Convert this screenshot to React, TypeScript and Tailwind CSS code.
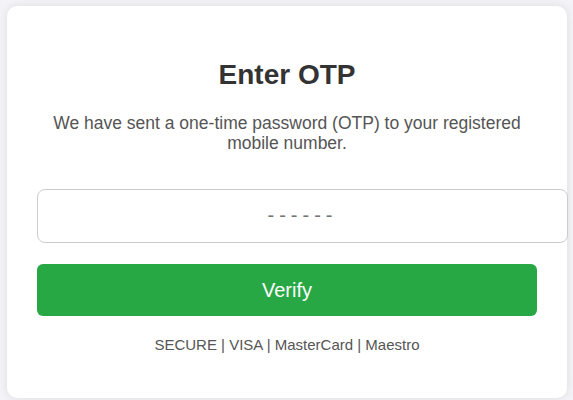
import React from "react";

export default function App() {
  return (
    <div
      className="min-h-screen bg-[#f4f4f8] pt-[6px] pl-[7px]"
      style={{ fontFamily: '"Liberation Sans", Arial, sans-serif' }}
    >
      <div className="w-[560px] bg-white rounded-[10px] shadow-[0_0_10px_rgba(0,0,0,0.1)] px-[30px] pt-[53px] pb-[45px] flex flex-col items-center text-center">
        <h2 className="text-[28px] font-bold text-[#333] leading-[32px]">Enter OTP</h2>
        <p className="mt-[23px] text-[17.5px] leading-[19.5px] text-[#555]">
          We have sent a one-time password (OTP) to your registered mobile number.
        </p>
        <input
          type="text"
          placeholder="------"
          className="mt-[35.5px] self-start w-[531px] h-[54px] shrink-0 border border-[#ccc] rounded-[8px] text-center text-[20px] tracking-[5px] placeholder:text-[#757575] bg-white outline-none"
        />
        <button className="mt-[21px] w-full h-[52px] bg-[#28a745] text-white text-[20px] rounded-[6px]">
          Verify
        </button>
        <p className="mt-[20.5px] text-[15px] leading-[17px] text-[#555]">
          SECURE | VISA | MasterCard | Maestro
        </p>
      </div>
    </div>
  );
}
